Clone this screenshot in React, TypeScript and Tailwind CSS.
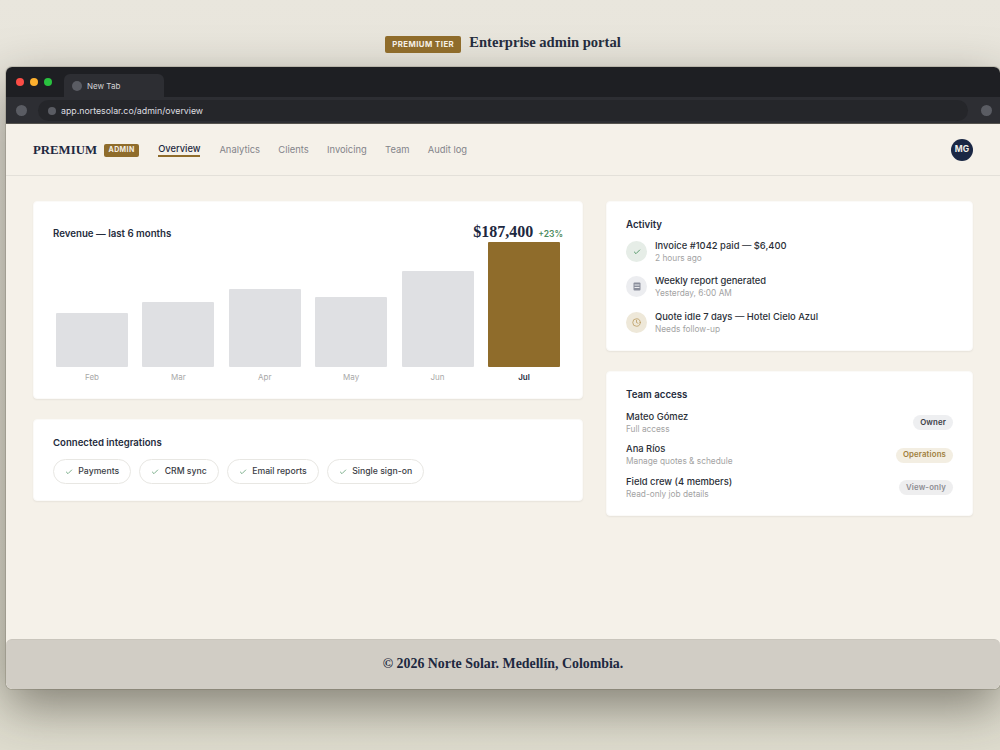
import React from "react";
import { Check, Clock } from "lucide-react";

const sans = "font-['Inter','Liberation_Sans',sans-serif]";
const serif = "font-['Liberation_Serif',serif]";

const bars = [
  { m: "Feb", h: 54 },
  { m: "Mar", h: 65 },
  { m: "Apr", h: 78 },
  { m: "May", h: 70 },
  { m: "Jun", h: 96 },
  { m: "Jul", h: 125, on: true },
];

const navItems = ["Analytics", "Clients", "Invoicing", "Team", "Audit log"];
const chips = ["Payments", "CRM sync", "Email reports", "Single sign-on"];

function Card({ className, children }: { className: string; children: React.ReactNode }) {
  return (
    <div className={`rounded-[4px] border border-[#fbfaf8] bg-white shadow-[0_1px_2px_rgba(0,0,0,0.06)] ${className}`}>
      {children}
    </div>
  );
}

function Activity({ icon, bg, title, sub }: { icon: React.ReactNode; bg: string; title: string; sub: string }) {
  return (
    <div className="flex h-[23px] items-center gap-[8px]">
      <div className={`flex h-[21px] w-[21px] shrink-0 items-center justify-center rounded-full ${bg}`}>{icon}</div>
      <div className="flex flex-col pt-[1px]">
        <div className="text-[9.4px] font-medium leading-[12px] text-[#2b2f38]">{title}</div>
        <div className="text-[8.3px] leading-[12px] text-[#a3a3a3]">{sub}</div>
      </div>
    </div>
  );
}

function Member({ name, sub, badge, badgeClass }: { name: string; sub: string; badge: string; badgeClass: string }) {
  return (
    <div className="flex h-[25px] items-center justify-between">
      <div className="flex flex-col">
        <div className="text-[9.4px] font-medium leading-[12px] text-[#2b2f38]">{name}</div>
        <div className="text-[8.3px] leading-[12px] text-[#a3a3a3]">{sub}</div>
      </div>
      <div className={`flex h-[15px] items-center rounded-full px-[7px] text-[7.8px] font-semibold tracking-[0.02em] ${badgeClass}`}>{badge}</div>
    </div>
  );
}

export default function App() {
  return (
    <div className={`relative h-[750px] w-[1000px] overflow-hidden bg-gradient-to-b from-[#e9e6dd] to-[#dfddcf] pl-[6px] ${sans}`}>
      <div className="flex h-[67px] items-start justify-center gap-[8px] pt-[36px]">
        <div className="flex h-[17px] items-center rounded-[2px] bg-[#8f6c2b] px-[7px] text-[7.8px] font-bold tracking-[0.06em] text-[#f5f0e6]">
          PREMIUM TIER
        </div>
        <div className={`text-[14.6px] font-bold leading-[13px] text-[#252c3d] ${serif}`}>Enterprise admin portal</div>
      </div>

      <div className="flex h-[622px] w-[994px] flex-col overflow-hidden rounded-[6px] bg-[#f5f1e9] shadow-[0_0_0_1px_rgba(90,85,70,0.22),0_18px_50px_rgba(40,36,25,0.5)]">
        <div className="flex h-[30px] bg-[#1e1f23] pl-[10px]">
          <div className="flex h-[30px] items-center gap-[6px] pb-[1px]">
            <span className="h-[8px] w-[8px] rounded-full bg-[#fb4d46]" />
            <span className="h-[8px] w-[8px] rounded-full bg-[#fdb02e]" />
            <span className="h-[8px] w-[8px] rounded-full bg-[#29c23f]" />
          </div>
          <div className="ml-[12px] mt-[7px] flex h-[23px] w-[100px] items-center gap-[5px] rounded-t-[6px] bg-[#2d2e33] pl-[8px]">
            <span className="h-[10px] w-[10px] rounded-full bg-[#5a5c63]" />
            <span className="text-[8px] text-[#d2d2d4]">New Tab</span>
          </div>
        </div>
        <div className="flex h-[27px] items-center border-b border-[#55534e] bg-[#2d2e33] pl-[10px] pr-[8px] pt-[1px]">
          <span className="h-[11px] w-[11px] shrink-0 rounded-full bg-[#5a5c63]" />
          <div className="ml-[11px] mr-[13px] flex h-[21px] flex-1 items-center gap-[5px] rounded-full bg-[#25262a] pl-[10px]">
            <span className="h-[8px] w-[8px] rounded-full bg-[#5a5c63]" />
            <span className="text-[8.8px] text-[#dedee0]">app.nortesolar.co/admin/overview</span>
          </div>
          <span className="h-[11px] w-[11px] shrink-0 rounded-full bg-[#5a5c63]" />
        </div>

        <div className="flex h-[52px] items-center justify-between border-b border-[#e3e0d9] px-[27px]">
          <div className="flex items-center">
            <div className={`mt-[1px] text-[12.8px] font-bold leading-none text-[#1d2840] ${serif}`}>PREMIUM</div>
            <div className="ml-[7px] mt-[1px] flex h-[13px] items-center rounded-[2px] bg-[#8f6c2b] px-[4.5px] text-[7px] font-bold tracking-[0.06em] text-[#f5f0e6]">
              ADMIN
            </div>
            <div className="ml-[19px] border-b-2 border-[#8f6c2b] text-[9.3px] font-medium leading-[13px] text-[#1d2840]">Overview</div>
            <div className="ml-[19px] flex gap-[18.3px] text-[9.4px] leading-[13px] text-[#84848a]">
              {navItems.map((n) => (
                <span key={n}>{n}</span>
              ))}
            </div>
          </div>
          <div className="flex h-[22px] w-[22px] items-center justify-center rounded-full bg-[#1a2744] text-[8.5px] font-bold text-[#f1eee8]">
            MG
          </div>
        </div>

        <div className="flex flex-1 gap-[23px] px-[27px] pt-[25px]">
          <div className="flex w-[550px] flex-col gap-[20px]">
            <Card className="h-[198px] px-[19px] pt-[20px]">
              <div className="flex h-[20px] items-center justify-between">
                <div className="pt-[5px] text-[9.7px] font-semibold text-[#252c3d]">Revenue — last 6 months</div>
                <div className="flex items-baseline gap-[5px]">
                  <span className={`text-[16px] font-bold text-[#1d2840] ${serif}`}>$187,400</span>
                  <span className="text-[8.5px] font-semibold text-[#4c8a5c]">+23%</span>
                </div>
              </div>
              <div className="flex h-[125px] items-end justify-between px-[3px]">
                {bars.map((b) => (
                  <div
                    key={b.m}
                    className={`w-[72px] rounded-[1px] ${b.on ? "bg-[#8f6c2b]" : "bg-[#dfe0e3]"}`}
                    style={{ height: b.h }}
                  />
                ))}
              </div>
              <div className="mt-[5px] flex justify-between px-[3px]">
                {bars.map((b) => (
                  <div
                    key={b.m}
                    className={`w-[72px] text-center text-[8px] leading-[11px] ${b.on ? "font-semibold text-[#252c3d]" : "text-[#a8a8a8]"}`}
                  >
                    {b.m}
                  </div>
                ))}
              </div>
            </Card>
            <Card className="h-[82px] px-[19px] pt-[16px]">
              <div className="text-[9.6px] font-semibold leading-[13px] text-[#252c3d]">Connected integrations</div>
              <div className="mt-[10px] flex gap-[8.3px]">
                {chips.map((c) => (
                  <div key={c} className="flex h-[25px] items-center gap-[5.5px] rounded-full border border-[#e8e7e3] px-[10.8px] pt-[1px] text-[8.7px] font-medium text-[#3a3d45]">
                    <Check size={8} strokeWidth={2} className="text-[#3e8a55]" />
                    {c}
                  </div>
                ))}
              </div>
            </Card>
          </div>

          <div className="flex w-[367px] flex-col gap-[20px]">
            <Card className="h-[150px] px-[19px] pt-[16px]">
              <div className="text-[9.7px] font-semibold leading-[13px] text-[#252c3d]">Activity</div>
              <div className="mt-[9px] flex flex-col gap-[12.3px]">
                <Activity bg="bg-[#e6ede7]" icon={<Check size={8} strokeWidth={2.5} className="text-[#3e8a55]" />} title="Invoice #1042 paid — $6,400" sub="2 hours ago" />
                <Activity
                  bg="bg-[#ecedf0]"
                  icon={
                    <svg width="8" height="9" viewBox="0 0 8 9">
                      <rect x="0.5" y="0.5" width="7" height="8" rx="1" fill="#8b8f9c" />
                      <rect x="1.5" y="2.5" width="5" height="1" fill="#ecedf0" />
                      <rect x="1.5" y="5" width="5" height="1" fill="#ecedf0" />
                    </svg>
                  }
                  title="Weekly report generated"
                  sub="Yesterday, 6:00 AM"
                />
                <Activity bg="bg-[#eee8d9]" icon={<Clock size={9} strokeWidth={2} className="text-[#b8975a]" />} title="Quote idle 7 days — Hotel Cielo Azul" sub="Needs follow-up" />
              </div>
            </Card>
            <Card className="h-[145px] px-[19px] pt-[16px]">
              <div className="text-[9.7px] font-semibold leading-[13px] text-[#252c3d]">Team access</div>
              <div className="mt-[9px] flex flex-col gap-[7.5px]">
                <Member name="Mateo Gómez" sub="Full access" badge="Owner" badgeClass="bg-[#eeeff1] text-[#3a3d45]" />
                <Member name="Ana Ríos" sub="Manage quotes & schedule" badge="Operations" badgeClass="bg-[#f3eee2] text-[#a07f3c]" />
                <Member name="Field crew (4 members)" sub="Read-only job details" badge="View-only" badgeClass="bg-[#eeeeef] text-[#8d8d92]" />
              </div>
            </Card>
          </div>
        </div>

        <div className="flex h-[50px] items-center justify-center rounded-[6px] border-t border-[#c9c5bc] bg-[#d1cdc5] pb-[1px]">
          <div className={`text-[13.9px] font-bold text-[#1d2840] ${serif}`}>© 2026 Norte Solar. Medellín, Colombia.</div>
        </div>
      </div>
    </div>
  );
}
